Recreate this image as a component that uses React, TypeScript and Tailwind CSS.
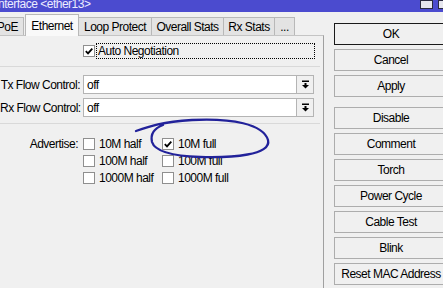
import React from "react";

const tabs = [
	{ label: "PoE", w: "w-[24px]", active: false },
	{ label: "Ethernet", w: "w-[54px]", active: true },
	{ label: "Loop Protect", w: "w-[73px]", active: false },
	{ label: "Overall Stats", w: "w-[72px]", active: false },
	{ label: "Rx Stats", w: "w-[51px]", active: false },
	{ label: "...", w: "w-[20px]", active: false },
];

const buttons = [
	"OK",
	"Cancel",
	"Apply",
	"Disable",
	"Comment",
	"Torch",
	"Power Cycle",
	"Cable Test",
	"Blink",
	"Reset MAC Address",
];

const advertise = [
	["10M half", false],
	["10M full", true],
	["100M half", false],
	["100M full", false],
	["1000M half", false],
	["1000M full", false],
] as const;

function CheckBox({ checked }: { checked: boolean }) {
	return (
		<div className="w-[12px] h-[12px] shrink-0 bg-white border border-[#8f8f8f] flex items-center justify-center">
			{checked && (
				<svg width="10" height="10" viewBox="0 0 10 10" aria-hidden="true">
					<path
						d="M1.8 5.2 L4 7.4 L8.3 2.6"
						fill="none"
						stroke="#000"
						strokeWidth="1.8"
					/>
				</svg>
			)}
		</div>
	);
}

function DropButton() {
	return (
		<div className="w-[17px] h-full shrink-0 bg-[#f0f0f0] border border-[#b4b4b4] border-l-0 flex items-center justify-center">
			<svg width="9" height="9" viewBox="0 0 9 9" aria-hidden="true">
				<rect x="1" y="0.5" width="7" height="1.5" fill="#000" />
				<rect x="3.5" y="3" width="2" height="2" fill="#000" />
				<path d="M1 5 L8 5 L4.5 8.5 Z" fill="#000" />
			</svg>
		</div>
	);
}

function FlowRow({ label, className }: { label: string; className: string }) {
	return (
		<div className={`flex items-center h-[19px] ${className}`}>
			<div className="w-[80px] text-right whitespace-nowrap">{label}</div>
			<div className="ml-[3px] w-[214px] h-full bg-white border border-[#b4b4b4] pl-[3px] flex items-center">
				off
			</div>
			<DropButton />
		</div>
	);
}

export default function App() {
	return (
		<div className="relative w-[443px] h-[288px] overflow-hidden bg-[#f0f0f0] text-black text-[12px] tracking-[-0.5px] leading-none font-['Liberation_Sans',Arial,sans-serif]">
			{/* Title bar */}
			<div className="h-[12px] bg-[#4b4bcf] flex items-start overflow-hidden">
				<span className="-mt-[3px] -ml-[2px] text-[#ececff] leading-[14px] whitespace-nowrap">
					nterface &lt;ether13&gt;
				</span>
				<div className="ml-auto flex gap-[5px] -mr-[8px]">
					<div className="w-[13px] h-[9px] bg-[#e6e6ee] border border-[#2a2a40]" />
					<div className="w-[13px] h-[9px] bg-[#e6e6ee] border border-[#2a2a40]" />
				</div>
			</div>

			<div className="flex">
				{/* Left: tabs + panel */}
				<div className="w-[324px] shrink-0 pt-[2px]">
					<div className="h-[21px] flex items-end">
						{tabs.map((t, i) =>
							t.active ? (
								<div
									key={t.label}
									className={`${t.w} ml-[1px] h-[22px] -mb-px relative z-10 bg-[#f9f9f9] border-t border-l border-r border-[#b8b8b8] flex items-center justify-center whitespace-nowrap`}
								>
									{t.label}
								</div>
							) : (
								<div
									key={t.label}
									className={`${t.w} h-[18px] bg-[#e3e3e3] border-t border-r border-[#b8b8b8] flex items-center whitespace-nowrap ${
										i === 0 ? "justify-end pr-[5px]" : "justify-center"
									}`}
								>
									{t.label}
								</div>
							),
						)}
					</div>

					<div className="h-[253px] bg-[#f0f0f0] border-t border-r border-t-[#c4c4c4] border-r-[#a0a0a0]">
						{/* Auto Negotiation */}
						<div className="mt-[7px] h-[16px] flex items-center">
							<div className="ml-[83px]">
								<CheckBox checked />
							</div>
							<div className="ml-[1px] w-[219px] h-[16px] border border-dotted border-black pl-[1px] flex items-center whitespace-nowrap">
								Auto Negotiation
							</div>
						</div>

						<div className="mt-[7px] h-px w-[320px] bg-[#d9d9d9]" />

						<FlowRow label="Tx Flow Control:" className="mt-[8px]" />
						<FlowRow label="Rx Flow Control:" className="mt-[4px]" />

						<div className="mt-[6px] h-px w-[320px] bg-[#d9d9d9]" />

						{/* Advertise */}
						<div className="mt-[11px] flex">
							<div className="w-[78px] h-[17px] flex items-center justify-end">
								Advertise:
							</div>
							<div className="ml-[5px] grid grid-cols-[79px_100px]">
								{advertise.map(([label, checked]) => (
									<div key={label} className="h-[17px] flex items-center whitespace-nowrap">
										<CheckBox checked={checked} />
										<span className="ml-[4px]">{label}</span>
									</div>
								))}
							</div>
						</div>
					</div>
				</div>

				{/* Right: buttons */}
				<div className="ml-[10px] pt-[11px] w-[114px] shrink-0 flex flex-col gap-[4px]">
					{buttons.map((b) => (
						<div
							key={b}
							className={`h-[22px] shrink-0 bg-[#f0f0f0] border flex items-center justify-center whitespace-nowrap ${
								b === "OK" ? "border-[#1a1a1a]" : "border-[#adadad]"
							} ${b === "Disable" ? "mt-[6px]" : ""}`}
						>
							{b}
						</div>
					))}
				</div>
			</div>

			{/* hand-drawn blue circle */}
			<svg
				className="absolute inset-0 pointer-events-none"
				width="443"
				height="288"
				viewBox="0 0 443 288"
				aria-hidden="true"
			>
				<path
					d="M136 131 C150 126 162 122 192 120 C232 118 263 124 268 140 C272 155 232 158 200 157 C175 156 155 152 152 142 C150 133 155 128 163 125"
					fill="none"
					stroke="#22229a"
					strokeWidth="2.3"
					strokeLinecap="round"
				/>
			</svg>
		</div>
	);
}
